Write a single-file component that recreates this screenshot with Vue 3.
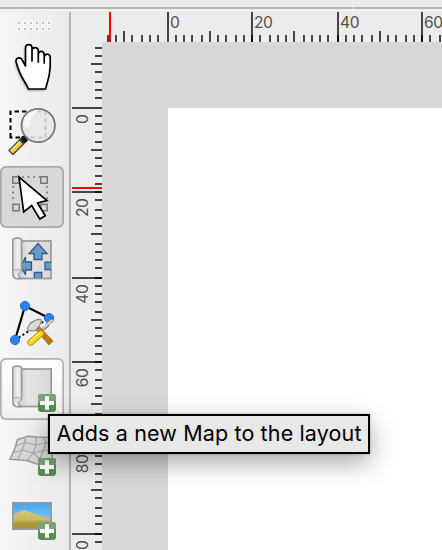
<script setup>
const STEP = 4.26
const ticks = (from, to) => {
  const list = []
  for (let i = from; i <= to; i++) {
    list.push({
      i,
      pos: 2 * Math.floor((i < 0 || i > 40 ? STEP : 4.2505) * i + 1e-6),
      kind: i % 10 === 0 ? 'major' : i % 5 === 0 ? 'mid' : 'minor',
    })
  }
  return list
}
const hTicks = ticks(-7, 32)
const vTicks = ticks(-7, 51)
const startOf = { major: 0, mid: 19, minor: 23 }
const majors = (list) => list.filter((t) => t.kind === 'major')
const grip = [19, 25, 31, 37, 43, 49]
</script>

<template>
  <div class="window">
    <div class="topbar"><span class="notch"></span></div>
    <div class="body">
      <aside class="toolbar">
        <svg class="grip" width="64" height="26" viewBox="0 12 64 26">
          <g v-for="x in grip" :key="x">
            <path :d="`M${x - 2} 21h4v4h-4zM${x - 2} 27h4v4h-4z`" fill="#fafafa" />
            <path :d="`M${x - 1} 22h2v2h-2zM${x - 1} 28h2v2h-2z`" fill="#c2c2c2" />
          </g>
        </svg>

        <button class="tool">
          <svg viewBox="0 38 64 62">
            <path class="soft" d="M28.5 90 C25 82 19 76 16 62 C15 58 20 57 22 61 L25.500 66 V48 C25.500 43.500 32 43.500 32 48 V50 C33 46.500 38 47 38 51 V53.500 C39.500 50 44 51 44 54.500 V57 C46 53 50.500 54 50.500 58 C51 72 49 78 45.500 90Z" />
            <path d="M28.500 89 C25.500 82 20 77 16.300 62.500 C14.500 58 20.500 56 22.500 60.500 L25.500 66 V48 C25.500 43.400 32 43.400 32 48 V50 C33 46.500 38.300 47 38.300 51 V54 C39.500 50 44.200 50.800 44.200 55 V57 C45.500 52.500 50.200 54 50.200 57.500 C50.800 71 49 77 45.500 89Z M32 50V61 M38.300 53V62 M44.200 56V63" fill="#fff" stroke="#000" stroke-width="1.700" stroke-linejoin="round" stroke-linecap="round" />
          </svg>
        </button>

        <button class="tool">
          <svg viewBox="0 102 64 62">
            <path d="M10.500 137.500V111.500H45.500V137.500Z" fill="none" stroke="#000" stroke-width="2" stroke-dasharray="4.500 3" />
            <path d="M25 138.500 L10.500 153" stroke="#484848" stroke-width="7" />
            <path d="M21 142.500 L11.500 152" stroke="#fcc62c" stroke-width="4" />
            <path d="M20 141.500 L10.500 151" stroke="#ffec91" stroke-width="1.400" />
            <circle cx="24.500" cy="139" r="3.400" fill="#151515" />
            <circle cx="38.200" cy="125.500" r="16.700" fill="#e6e8e8" fill-opacity=".86" stroke="#777" stroke-width="1.800" />
            <path d="M24 126 C21 117 30 109 39 110 C34 114 30 118 31 123 C31 127 26 130 24 126Z" fill="#fff" opacity=".6" />
          </svg>
        </button>

        <button class="tool checked">
          <svg viewBox="0 166 64 62">
            <path d="M22 177.200H40M22 207.800H40M13.200 186V202M47 186V202" stroke="#777" stroke-width="1.800" stroke-dasharray="1.800 3.800" fill="none" />
            <g fill="#d8d8d8" stroke="#777" stroke-width="1.500">
              <rect x="12.800" y="176.800" width="6.400" height="6.400" />
              <rect x="40.800" y="176.800" width="6.400" height="6.400" />
              <rect x="12.800" y="204.300" width="6.400" height="6.400" />
              <rect x="40.800" y="204.300" width="6.400" height="6.400" />
            </g>
            <path d="M19 177 L23.700 212 L31.700 205.500 L39.800 219 L45.300 215.700 L37.500 203 L47 200.500Z" fill="#fff" stroke="#000" stroke-width="1.700" />
          </svg>
        </button>

        <button class="tool">
          <svg viewBox="0 230 64 62">
            <defs>
              <linearGradient id="sheet"><stop offset="0" stop-color="#ccc" /><stop offset=".3" stop-color="#e4e4e4" /><stop offset="1" stop-color="#d8d8d8" /></linearGradient>
              <linearGradient id="roll"><stop offset="0" stop-color="#d0d0d0" /><stop offset=".5" stop-color="#f1f1f1" /><stop offset="1" stop-color="#d8d8d8" /></linearGradient>
            </defs>
            <rect x="18" y="241" width="33" height="37.500" fill="url(#sheet)" stroke="#999" stroke-width="1.700" />
            <g fill="#6c99c9" stroke="#315b87" stroke-width="1.300">
              <path d="M38 243.500 L47 253.500 H42 V259.500 H34 V253.500 H29Z" />
              <path d="M21 266 L25.500 257 V262 H31.500 V270 H25.500 V275Z" />
              <path d="M51 262.200 H45 V269.500 H51" />
              <path d="M34.300 278 V272.500 H41.700 V278" />
            </g>
            <path d="M12.800 240 C13 237.500 21.500 237.500 21.700 240 V271 C16 271 18 278 22 278.700 H17 C14 278.700 12.800 276 12.800 273Z" fill="url(#roll)" stroke="#999" stroke-width="1.600" />
            <path d="M13 271 C15 268 22 269 21 273 C17 272 18 277 20 278" fill="#ddd" stroke="#aaa" />
          </svg>
        </button>

        <button class="tool">
          <svg viewBox="0 294 64 62">
            <path d="M15 340 L25 306 L49 318" fill="none" stroke="#000" stroke-width="2.200" />
            <path d="M15 340 L49 318" stroke="#000" stroke-width="2" stroke-dasharray="2 2.500" />
            <g fill="#2782ff" stroke="#2b69bf" stroke-width="1">
              <circle cx="25" cy="306" r="4.600" /><circle cx="49" cy="318" r="4.600" /><circle cx="15" cy="340" r="4.600" />
            </g>
            <path d="M30 323 L34 321 L53 341 L49 345Z" fill="#bd7713" stroke="#a46814" stroke-width=".8" />
            <path d="M42 330 L47 326 C49 320 52 321 52.500 320" stroke="#888" stroke-width="3.500" fill="none" />
            <path d="M43 329 L48 324 C50 321 52 321 52.500 320" stroke="#ddd" stroke-width="1.600" fill="none" />
            <path d="M28 331 C26 326 32 322 35 320.500 C38 319 42 319 41.500 321 C41 325 38 327 36 330 C33 332 31 330 28 331Z" fill="#d9d9d5" stroke="#8c8c8c" stroke-width="1.200" />
            <path d="M30.500 342.500 L41 333.500" stroke="#b7920b" stroke-width="6.500" stroke-linecap="round" />
            <path d="M30.500 342.500 L41 333.500" stroke="#f3d91c" stroke-width="4.600" stroke-linecap="round" />
            <path d="M30 341 L40 332.500" stroke="#fff184" stroke-width="1.300" />
          </svg>
        </button>

        <button class="tool hovered">
          <svg viewBox="0 358 64 62">
            <rect x="18" y="369" width="33.200" height="37.500" fill="url(#sheet)" stroke="#999" stroke-width="1.700" />
            <path d="M12.800 368 C13 365.500 21.500 365.500 21.700 368 V399 C16 399 18 406 22 406.700 H17 C14 406.700 12.800 404 12.800 401Z" fill="url(#roll)" stroke="#999" stroke-width="1.600" />
            <path d="M13 399 C15 396 22 397 21 401 C17 400 18 405 20 406" fill="#ddd" stroke="#aaa" />
            <rect x="38" y="394" width="18" height="18" rx="3" fill="#588c55" />
            <path d="M38 403V397Q38 394 41 394H53Q56 394 56 397V401Z" fill="#79a477" />
            <path d="M40 403H54M47 396.200V409.800" stroke="#fff" stroke-width="4" />
          </svg>
        </button>

        <button class="tool">
          <svg viewBox="0 422 64 62">
            <path d="M17.500 439.500 L28 436.300 L37 437 L49 437.500 L52 442 V466 L37 464 L27 460.500 L9.800 459.300 C13 454 15.500 447 17.500 439.500Z" fill="#d9d9d9" stroke="#999" stroke-width="1.500" stroke-linejoin="round" />
            <path d="M16 446 L25 442.500 L36 445 L51 442 M13 453 L22 450 L33 453 L52 449 M25 437 L25 442.500 L22 450 L18 459 M36 437 L36 445 L33 453 L28 460 M33 453 L40 459 M44 438 L46 443 L43 451 L38 463" fill="none" stroke="#a8a8a8" stroke-width="1.200" />
            <rect x="38" y="458" width="18" height="18" rx="3" fill="#588c55" />
            <path d="M38 467V461Q38 458 41 458H53Q56 458 56 461V465Z" fill="#79a477" />
            <path d="M40 467H54M47 460.200V473.800" stroke="#fff" stroke-width="4" />
          </svg>
        </button>

        <button class="tool">
          <svg viewBox="0 486 64 62">
            <defs>
              <linearGradient id="sky" x2="0" y2="1"><stop offset="0" stop-color="#44a3ed" /><stop offset=".6" stop-color="#7cc4f3" /></linearGradient>
              <linearGradient id="sand" x2="0" y2="1"><stop offset="0" stop-color="#d8c778" /><stop offset=".5" stop-color="#cdba66" /><stop offset=".7" stop-color="#ac983b" /><stop offset="1" stop-color="#a8933a" /></linearGradient>
            </defs>
            <rect x="13" y="503" width="38" height="26" fill="url(#sky)" />
            <path d="M13 514.500 L24 510 L51 519.500 V529 H13Z" fill="url(#sand)" />
            <rect x="12.900" y="502.900" width="38.200" height="26.200" fill="none" stroke="#999" stroke-width="1.800" />
            <rect x="38" y="522" width="18" height="18" rx="3" fill="#588c55" />
            <path d="M38 531V525Q38 522 41 522H53Q56 522 56 525V529Z" fill="#79a477" />
            <path d="M40 531H54M47 524.200V537.800" stroke="#fff" stroke-width="4" />
          </svg>
        </button>
      </aside>

      <main class="layout">
        <svg class="ruler" width="371" height="30" viewBox="71 12 371 30">
          <g v-for="t in hTicks" :key="t.i">
            <rect :x="167 + t.pos" :y="12 + startOf[t.kind]" width="2" :height="30 - startOf[t.kind]" fill="#444" />
            <rect v-if="t.kind === 'major' && t.i" :x="167 + t.pos" y="35" width="2" height="7" fill="#111" />
          </g>
          <text v-for="t in majors(hTicks)" :key="'l' + t.i" :x="170 + t.pos" y="28">{{ t.i * 2 }}</text>
          <rect x="109" y="12" width="2" height="30" fill="#f00" />
        </svg>
        <div class="row">
          <svg class="ruler" width="31" height="508" viewBox="71 42 31 508">
            <g v-for="t in vTicks" :key="t.i">
              <rect :x="72 + startOf[t.kind]" :y="107 + t.pos" :width="30 - startOf[t.kind]" height="2" fill="#444" />
              <rect v-if="t.kind === 'major' && t.i" x="95" :y="107 + t.pos" width="7" height="2" fill="#111" />
            </g>
            <text v-for="t in majors(vTicks)" :key="'l' + t.i" text-anchor="end" :transform="`translate(88 ${114.500 + t.pos}) rotate(-90)`">{{ t.i * 2 }}</text>
            <rect x="72" y="187" width="30" height="2" fill="#f00" />
          </svg>
          <div class="canvas"><div class="page"></div></div>
        </div>
      </main>
    </div>
    <div class="tooltip">
      <svg width="318" height="36" viewBox="50 416 318 36">
        <text x="56.500" y="441" textLength="305">Adds a new Map to the layout</text>
      </svg>
    </div>
  </div>
</template>

<style>
body { margin: 0; overflow: hidden; }
</style>

<style scoped>
.window {
  position: relative;
  display: flex;
  flex-direction: column;
  width: 442px;
  height: 550px;
  overflow: hidden;
  background: #ececec;
  font-family: Inter, Roboto, "Liberation Sans", sans-serif;
}
svg { display: block; }
.topbar {
  box-sizing: border-box;
  height: 12px;
  flex: none;
  padding: 7px 0 0 353px;
  background: linear-gradient(#ececec 7px, #b3b3b3 7px, #b3b3b3 9px, #f2f2f2 9px, #f2f2f2 11px, #ececec 11px);
}
.notch { display: block; width: 1px; height: 2px; background: #ececec; }
.body { display: flex; flex: 1; min-height: 0; }
.toolbar {
  box-sizing: border-box;
  display: flex;
  flex-direction: column;
  gap: 2px;
  width: 71px;
  flex: none;
  border-right: 2px solid #b3b3b3;
  background: linear-gradient(90deg, #f6f6f6, #eaeaea);
}
.grip { margin-bottom: -2px; flex: none; }
.tool {
  width: 64px;
  height: 62px;
  flex: none;
  padding: 0;
  border: 0;
  border-radius: 6px;
  background: none;
}
.tool svg { width: 64px; height: 62px; }
.checked { background: #d8d8d8; box-shadow: inset 0 0 0 1.7px #aaa; }
.hovered { background: linear-gradient(#fefefe, #f1f1f1); box-shadow: inset 0 0 0 1.7px #b0b0b0; }
.soft { fill: #000; opacity: .3; filter: blur(1px); transform: translate(-1px, 1px); }
.layout { display: flex; flex-direction: column; flex: 1; min-width: 0; }
.ruler { flex: none; background: #ececec; }
.ruler text { font-size: 15.6px; letter-spacing: -.4px; fill: #505050; }
.row { display: flex; flex: 1; min-height: 0; }
.canvas { display: flex; flex: 1; padding: 66px 0 0 66px; background: #d7d7d7; }
.page { flex: 1; background: #fff; }
.tooltip {
  position: absolute;
  left: 48px;
  top: 414px;
  border: 2px solid #000;
  background: #e8e8e8;
  box-shadow: 0 9px 24px rgba(0, 0, 0, .34), 0 0 2px rgba(0, 0, 0, .3);
}
.tooltip text { font-size: 21.5px; fill: #000; }
</style>
